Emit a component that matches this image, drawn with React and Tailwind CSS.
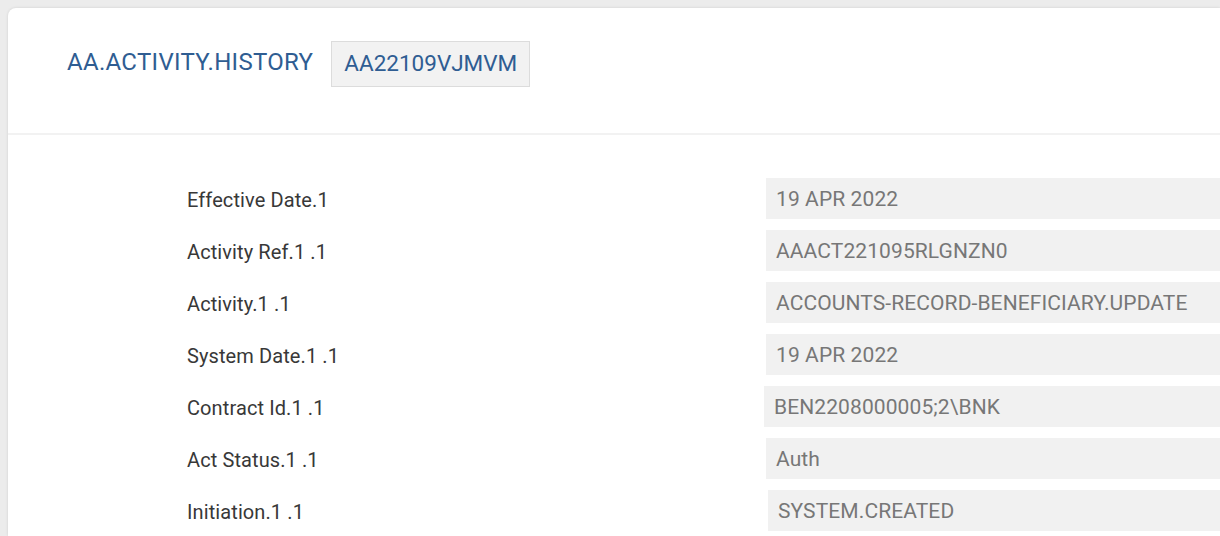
const rows = [
  { label: "Effective Date.1", value: "19 APR 2022" },
  { label: "Activity Ref.1 .1", value: "AAACT221095RLGNZN0" },
  { label: "Activity.1 .1", value: "ACCOUNTS-RECORD-BENEFICIARY.UPDATE" },
  { label: "System Date.1 .1", value: "19 APR 2022" },
  { label: "Contract Id.1 .1", value: "BEN2208000005;2\\BNK", shift: "ml-[-2px]" },
  { label: "Act Status.1 .1", value: "Auth" },
  { label: "Initiation.1 .1", value: "SYSTEM.CREATED", shift: "ml-[2px]" },
];

const App = () => {
  return (
    <div
      className="w-[1220px] h-[536px] overflow-hidden bg-[#ececec] pt-2 pl-2"
      style={{ fontFamily: "Roboto, 'Liberation Sans', sans-serif" }}
    >
      <div className="h-full bg-white rounded-tl-lg shadow-[0_0_3px_rgba(0,0,0,0.12)]">
        <div className="h-[127px] flex items-start pt-[33px] pl-[59px] gap-[18px] border-b-2 border-[#f2f2f2]">
          <h1 className="text-[24px] leading-[40px] tracking-[0.3px] text-[#2f5d92] mt-px">
            AA.ACTIVITY.HISTORY
          </h1>
          <div className="h-[46px] px-3 flex items-center bg-[#f2f2f2] border border-[#dcdcdc] text-[22.5px] text-[#2f5d92]">
            AA22109VJMVM
          </div>
        </div>
        <div className="flex flex-col gap-[11px] pt-[43px] pl-[179px]">
          {rows.map((row) => (
            <div key={row.label} className="flex items-center h-[41px]">
              <div className="w-[579px] shrink-0 pt-[3px] text-[20px] tracking-[0.1px] text-[#383838]">
                {row.label}
              </div>
              <div
                className={`flex-1 h-[41px] flex items-center pl-[10px] pt-[3px] bg-[#f1f1f1] text-[21px] tracking-[0.1px] text-[#777777] ${row.shift || ""}`}
              >
                {row.value}
              </div>
            </div>
          ))}
        </div>
      </div>
    </div>
  );
};

export default App;
